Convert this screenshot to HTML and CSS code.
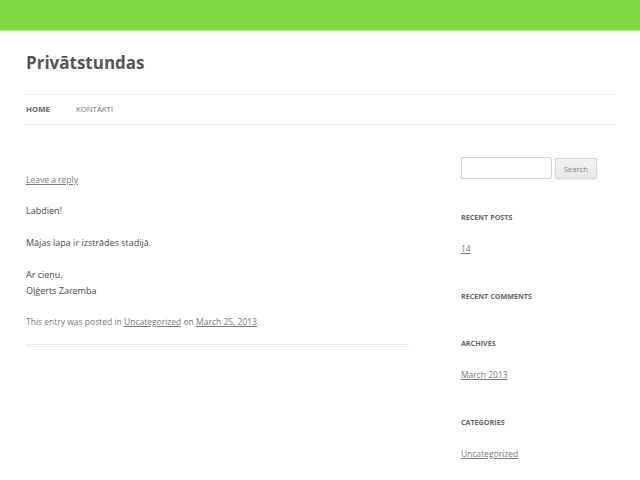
FILE: index.html
```html
<!DOCTYPE html>
<html lang="lv">
<head>
<meta charset="utf-8">
<title>Privātstundas</title>
<link rel="stylesheet" href="styles.css">
</head>
<body>
<div class="topbar"></div>
<div class="site">
  <header class="site-header">
    <h1 class="site-title"><a href="#">Privātstundas</a></h1>
    <nav class="main-nav">
      <ul>
        <li class="current"><a href="#">Home</a></li>
        <li><a href="#">Kontakti</a></li>
      </ul>
    </nav>
  </header>
  <div class="main">
    <div class="content">
      <article class="post">
        <div class="entry-header"><a class="comments-link" href="#">Leave a reply</a></div>
        <div class="entry-content">
          <p>Labdien!</p>
          <p>Mājas lapa ir izstrādes stadijā.</p>
          <p>Ar cieņu,<br>Oļģerts Zaremba</p>
        </div>
        <footer class="entry-meta">This entry was posted in <a href="#">Uncategorized</a> on <a href="#">March 25, 2013</a>.</footer>
      </article>
    </div>
    <aside class="sidebar">
      <div class="widget search-widget">
        <form class="search-form">
          <input type="text" class="search-input">
          <button type="button" class="search-btn">Search</button>
        </form>
      </div>
      <div class="widget">
        <h3 class="widget-title">Recent Posts</h3>
        <ul><li><a href="#">14</a></li></ul>
      </div>
      <div class="widget">
        <h3 class="widget-title">Recent Comments</h3>
      </div>
      <div class="widget">
        <h3 class="widget-title">Archives</h3>
        <ul><li><a href="#">March 2013</a></li></ul>
      </div>
      <div class="widget">
        <h3 class="widget-title">Categories</h3>
        <ul><li><a href="#">Uncategorized</a></li></ul>
      </div>
    </aside>
  </div>
</div>
</body>
</html>
```
FILE: styles.css
```css
html, body {
  margin: 0;
  padding: 0;
  background: #fff;
}
body {
  font-family: "Open Sans", "DejaVu Sans", sans-serif;
  color: #4a4a4a;
  font-size: 9px;
  line-height: 16px;
}
.topbar {
  height: 30px;
  background: #81d742;
  border-bottom: 1px solid #c2eca4;
}
.site {
  padding: 0 26px;
}
.site-header {
  padding-top: 16px;
}
.site-title {
  margin: 0;
  font-size: 17px;
  line-height: 32px;
  font-weight: 700;
}
.site-title a {
  color: #555;
  text-decoration: none;
}
.main-nav {
  margin-top: 15px;
  border-top: 1px solid #ededed;
  border-bottom: 1px solid #ededed;
}
.main-nav ul {
  list-style: none;
  margin: 0;
  padding: 0;
  display: flex;
  gap: 26px;
}
.main-nav li {
  font-size: 7.8px;
  line-height: 29px;
  text-transform: uppercase;
}
.main-nav a {
  color: #737373;
  text-decoration: none;
}
.main-nav .current a {
  color: #666;
  font-weight: 700;
}
.main {
  display: flex;
  justify-content: space-between;
  align-items: flex-start;
}
.content {
  width: 65.1%;
  padding-top: 47px;
}
.post {
  padding-bottom: 14px;
  border-bottom: 3px double #ededed;
}
.comments-link {
  font-size: 8.5px;
  line-height: 16px;
  color: #7a7a7a;
}
.entry-header {
  line-height: 16px;
  margin-bottom: 15px;
}
.entry-content p {
  margin: 0 0 16px;
}
.entry-content p:last-child {
  margin-bottom: 15px;
}
.entry-meta {
  font-size: 8.5px;
  line-height: 16px;
  color: #7a7a7a;
}
.entry-meta a {
  color: #7a7a7a;
}
.sidebar {
  width: 26.04%;
  padding-top: 32px;
}
.widget {
  margin-bottom: 31px;
  font-size: 8.5px;
  line-height: 16px;
}
.search-widget {
  margin-bottom: 30px;
}
.search-form {
  display: flex;
  align-items: center;
  gap: 3px;
  height: 22px;
}
.search-input {
  box-sizing: border-box;
  width: 91px;
  height: 22px;
  margin: 0;
  border: 1px solid #d4d4d4;
  border-radius: 2px;
  background: #fff;
  box-shadow: inset 0 1px 1px rgba(0,0,0,0.03);
}
.search-btn {
  box-sizing: border-box;
  width: 42px;
  height: 21px;
  margin: 1px 0 0;
  padding: 0;
  font-family: "Open Sans", "DejaVu Sans", sans-serif;
  font-size: 7.6px;
  color: #858585;
  background: linear-gradient(#f4f4f4, #e6e6e6);
  border: 1px solid #d6d6d6;
  border-radius: 2px;
  box-shadow: 0 1px 2px rgba(64,64,64,0.1);
}
.widget-title {
  margin: 0 0 16px;
  font-size: 7.2px;
  line-height: 16px;
  font-weight: 700;
  text-transform: uppercase;
  color: #666;
}
.widget ul {
  list-style: none;
  margin: 0;
  padding: 0;
}
.widget a {
  color: #7a7a7a;
}
```
